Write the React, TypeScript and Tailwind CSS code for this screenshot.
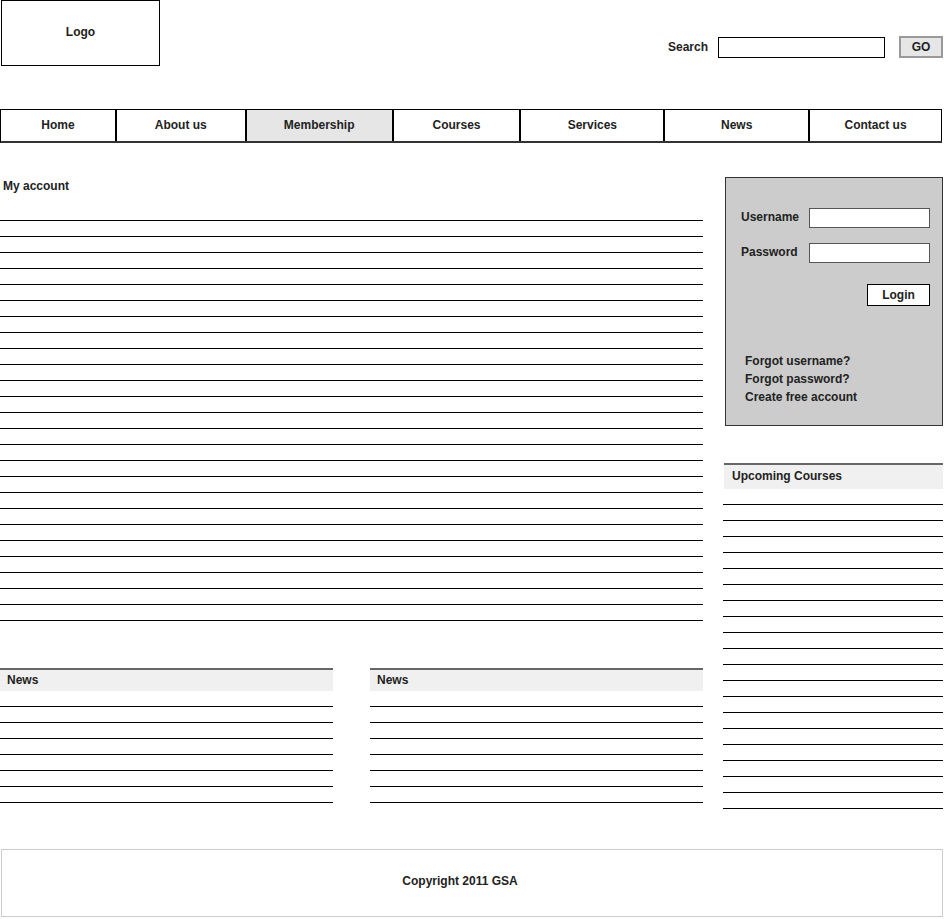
import React from "react";

const navItems = [
  { label: "Home", w: "w-[116px]" },
  { label: "About us", w: "w-[130px]" },
  { label: "Membership", w: "w-[147px]", active: true },
  { label: "Courses", w: "w-[128px]" },
  { label: "Services", w: "w-[144px]" },
  { label: "News", w: "w-[145px]" },
  { label: "Contact us", w: "w-[132px]", last: true },
];

function Lines({ count }: { count: number }) {
  return (
    <div>
      {Array.from({ length: count }).map((_, i) => (
        <div key={i} className="h-[16px] border-b border-black" />
      ))}
    </div>
  );
}

function BoxHeader({ title, className = "" }: { title: string; className?: string }) {
  return (
    <div className={`bg-[#f0f0f0] border-t-2 border-[#666] flex items-center pb-[2px] text-[12px] font-bold text-[#222] ${className}`}>
      {title}
    </div>
  );
}

export default function App() {
  return (
    <div className="w-[946px] bg-white text-[#222] font-['Liberation_Sans',Arial,sans-serif] text-[12px] font-bold">
      {/* header */}
      <div className="flex items-start justify-between pr-[3px]">
        <div className="ml-[1px] w-[159px] h-[66px] border border-black flex items-center justify-center pb-[2px]">Logo</div>
        <div className="flex items-center mt-[36px]">
          <span className="mr-[10px] leading-[20px]">Search</span>
          <input className="w-[167px] h-[21px] border border-black bg-white outline-none" />
          <button className="ml-[14px] w-[44px] h-[22px] bg-[#e6e6e6] border-2 border-[#999] leading-none pb-[1px]">GO</button>
        </div>
      </div>

      {/* navigation */}
      <div className="mt-[43px] flex w-[942px] h-[34px] border-t border-l border-black border-b-2 border-b-[#333]">
        {navItems.map((n) => (
          <div
            key={n.label}
            className={`${n.w} flex items-center justify-center pb-[2px] border-black ${n.last ? "border-r" : "border-r-2"} ${n.active ? "bg-[#e6e6e6]" : "bg-white"}`}
          >
            {n.label}
          </div>
        ))}
      </div>

      {/* main content */}
      <div className="flex mt-[34px]">
        <div className="w-[703px]">
          <div className="mt-[1px] h-[16px] leading-[16px] pl-[3px]">My account</div>
          <div className="mt-[11px]">
            <Lines count={26} />
          </div>

          <div className="mt-[47px] flex justify-between">
            {[0, 1].map((i) => (
              <div key={i} className="w-[333px]">
                <BoxHeader title="News" className="h-[23px] pl-[7px]" />
                <Lines count={7} />
              </div>
            ))}
          </div>
        </div>

        <div className="ml-[20px] w-[220px]">
          {/* login panel */}
          <div className="ml-[2px] h-[249px] bg-[#cccccc] border border-[#333] pt-[30px] pr-[12px] pl-[15px]">
            <div className="flex items-center justify-between h-[20px]">
              <span className="pb-[2px]">Username</span>
              <input className="w-[121px] h-[20px] bg-white border border-[#555] outline-none" />
            </div>
            <div className="flex items-center justify-between h-[20px] mt-[15px]">
              <span className="pb-[2px]">Password</span>
              <input className="w-[121px] h-[20px] bg-white border border-[#555] outline-none" />
            </div>
            <div className="flex justify-end mt-[21px]">
              <button className="w-[63px] h-[22px] bg-white border border-black text-[12px] leading-none pb-[1px]">Login</button>
            </div>
            <div className="mt-[46px] pl-[4px] leading-[18px]">
              <div>Forgot username?</div>
              <div>Forgot password?</div>
              <div>Create free account</div>
            </div>
          </div>

          {/* upcoming courses */}
          <div className="mt-[37px]">
            <BoxHeader title="Upcoming Courses" className="ml-[1px] h-[26px] pl-[8px]" />
            <Lines count={20} />
          </div>
        </div>
      </div>

      {/* footer */}
      <div className="mt-[40px] ml-[1px] w-[942px] h-[68px] border border-[#ccc] flex items-center justify-center pr-[24px] pb-[4px]">
        Copyright 2011 GSA
      </div>
    </div>
  );
}
